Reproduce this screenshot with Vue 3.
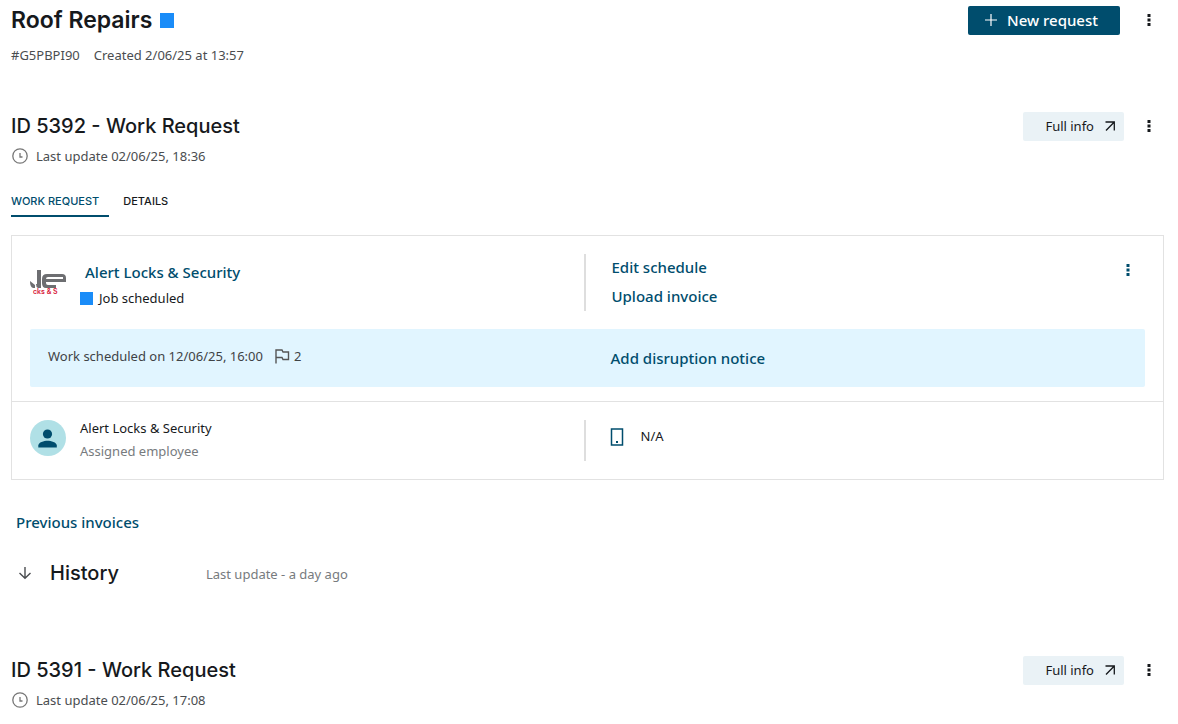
<script setup>
const requests = [
  { id: 5392, updated: '02/06/25, 18:36', open: true },
  { id: 5391, updated: '02/06/25, 17:08', open: false },
]
</script>

<template>
  <main class="page">
    <header class="row">
      <h1 class="title">Roof Repairs <span class="status"></span></h1>
      <div class="actions">
        <button class="primary" type="button">
          <svg width="12" height="12" viewBox="0 0 12 12" aria-hidden="true"><path d="M6 0v12M0 6h12" stroke="currentColor" stroke-width="1.2" /></svg>
          <span>New request</span>
        </button>
        <button class="kebab" type="button" aria-label="More options">
          <svg width="4" height="14" viewBox="0 0 4 14"><path d="M0.5 1h3v3h-3zM0.5 5.5h3v3h-3zM0.5 10h3v3h-3z" fill="currentColor" /></svg>
        </button>
      </div>
    </header>
    <p class="meta"><span>#G5PBPI90</span><span>Created 2/06/25 at 13:57</span></p>

    <section v-for="request in requests" :key="request.id" class="request">
      <div class="row">
        <h2 class="heading">ID {{ request.id }} - Work Request</h2>
        <div class="actions">
          <button class="secondary" type="button">
            <span>Full info</span>
            <svg width="12" height="12" viewBox="0 0 12 12" aria-hidden="true"><path d="M1.5 2H10.3V10.5M10.3 2L2 10.5" fill="none" stroke="currentColor" stroke-width="1.3" /></svg>
          </button>
          <button class="kebab" type="button" aria-label="More options">
            <svg width="4" height="14" viewBox="0 0 4 14"><path d="M0.5 1h3v3h-3zM0.5 5.5h3v3h-3zM0.5 10h3v3h-3z" fill="currentColor" /></svg>
          </button>
        </div>
      </div>
      <p class="updated">
        <svg width="18" height="18" viewBox="0 0 18 18" aria-hidden="true"><circle cx="9" cy="9" r="7.2" fill="none" stroke="#777" stroke-width="1.3" /><path d="M9 6V10H11.5" fill="none" stroke="#777" stroke-width="1.3" /></svg>
        <span>Last update {{ request.updated }}</span>
      </p>

      <template v-if="request.open">
        <nav class="tabs">
          <a class="tab active" href="#work">WORK REQUEST</a>
          <a class="tab" href="#details">DETAILS</a>
        </nav>

        <div class="card">
          <div class="job">
            <div class="split">
              <div class="left supplier">
                <svg class="logo" width="36" height="36" viewBox="0 0 36 36" aria-hidden="true">
                  <path d="M7 5H11V23H8Q6 22 6 19L7 19Z" fill="#6d6e71" />
                  <path d="M0 16L5 20V23H3Q0 22 0 16Z" fill="#6d6e71" />
                  <path d="M17 9H32Q36 9 36 13V17H16V18Q16 20 18 20H26V23H16Q12 23 12 18V14Q12 9 17 9ZM18 12Q16 12 16 14H33V12Z" fill="#6d6e71" fill-rule="evenodd" />
                  <text x="3" y="29" font-size="7" font-weight="600" font-family="Inter, sans-serif" fill="#d8203a">cks &amp; S</text>
                </svg>
                <div class="supplier-text">
                  <a class="link name" href="#supplier">Alert Locks &amp; Security</a>
                  <p class="state"><span class="status small"></span>Job scheduled</p>
                </div>
              </div>
              <div class="right bar links">
                <a class="link" href="#schedule">Edit schedule</a>
                <a class="link" href="#invoice">Upload invoice</a>
              </div>
              <button class="kebab blue" type="button" aria-label="Job options">
                <svg width="4" height="14" viewBox="0 0 4 14"><path d="M0.5 1h3v3h-3zM0.5 5.5h3v3h-3zM0.5 10h3v3h-3z" fill="currentColor" /></svg>
              </button>
            </div>
            <div class="notice">
              <p class="left scheduled">
                <span>Work scheduled on 12/06/25, 16:00</span>
                <svg width="16" height="16" viewBox="0 0 16 16" aria-hidden="true"><path d="M2 15.5V2H8L9 4H14.5V11.5H9L8 9.5H2" fill="none" stroke="#555" stroke-width="1.4" /></svg>
                <span>2</span>
              </p>
              <div class="right"><a class="link" href="#disruption">Add disruption notice</a></div>
            </div>
          </div>
          <div class="split employee">
            <div class="left person">
              <svg width="36" height="36" viewBox="0 0 36 36" aria-hidden="true"><circle cx="18" cy="18" r="18" fill="#b0e0e6" /><circle cx="17.5" cy="14" r="4.6" fill="#004d6d" /><path d="M8.3 27.5V25.5C8.3 22.3 14 20.7 17.5 20.7S26.8 22.3 26.8 25.5V27.5Z" fill="#004d6d" /></svg>
              <div class="person-text">
                <p>Alert Locks &amp; Security</p>
                <p class="role">Assigned employee</p>
              </div>
            </div>
            <div class="right bar phone">
              <svg width="14" height="20" viewBox="0 0 14 20" aria-hidden="true"><path d="M1.5 2H12.5V18H1.5Z" fill="none" stroke="#004d6d" stroke-width="1.5" /><path d="M6 14h2v2H6z" fill="#004d6d" /></svg>
              <span>N/A</span>
            </div>
          </div>
        </div>

        <a class="link previous" href="#previous">Previous invoices</a>

        <div class="history">
          <button class="toggle" type="button" aria-label="Expand history">
            <svg width="14" height="14" viewBox="0 0 14 14"><path d="M7 1V12M1.5 7L7 12.2L12.5 7" fill="none" stroke="currentColor" stroke-width="1.4" /></svg>
          </button>
          <h2 class="heading">History</h2>
          <span class="ago">Last update - a day ago</span>
        </div>
      </template>
    </section>
  </main>
</template>

<style>
body {
  margin: 0;
  background: #fff;
}
</style>

<style scoped>
.page {
  padding: 4px 14px 0 11px;
  font-family: 'Noto Sans', sans-serif;
  font-size: 13px;
  line-height: 18px;
  color: #16191c;
}
h1, h2, p {
  margin: 0;
}
button {
  font: inherit;
  border: 0;
  padding: 0;
  background: none;
  cursor: pointer;
}
svg {
  flex: none;
  display: block;
}
.row {
  display: flex;
  align-items: center;
  justify-content: space-between;
  height: 32px;
}
.title {
  display: flex;
  align-items: center;
  gap: 8px;
  font-family: Inter, sans-serif;
  font-size: 23px;
  line-height: 28px;
  font-weight: 600;
}
.heading {
  font-family: Inter, sans-serif;
  font-size: 20px;
  line-height: 26px;
  font-weight: 500;
}
.status {
  flex: none;
  width: 14px;
  height: 15px;
  background: #1a8cf8;
}
.status.small {
  width: 13px;
  height: 13px;
}
.actions {
  display: flex;
  align-items: center;
}
.kebab {
  display: flex;
  align-items: center;
  justify-content: center;
  width: 30px;
  height: 28px;
  color: #16191c;
}
.kebab.blue {
  color: #004d6d;
}
.primary {
  display: flex;
  align-items: center;
  gap: 10px;
  height: 29px;
  padding: 0 22px 0 17px;
  margin-right: 14px;
  border-radius: 2px;
  background: #004d6d;
  color: #fff;
  font-size: 15px;
  font-weight: 500;
}
.secondary {
  display: flex;
  align-items: center;
  gap: 10px;
  height: 29px;
  padding: 0 8px 0 22px;
  margin-right: 10px;
  border-radius: 2px;
  background: #eaf2f6;
  color: #16191c;
}
.meta {
  display: flex;
  gap: 14px;
  margin-top: 10px;
  color: #4a4d50;
}
.request {
  margin-top: 46px;
}
.request + .request {
  margin-top: 68px;
}
.updated {
  display: flex;
  align-items: center;
  gap: 7px;
  margin-top: 5px;
  color: #4a4d50;
}
.tabs {
  display: flex;
  gap: 14px;
  margin-top: 27px;
}
.tab {
  padding-bottom: 5px;
  padding-right: 10px;
  border-bottom: 2px solid transparent;
  font-family: Inter, sans-serif;
  font-size: 11px;
  font-weight: 500;
  color: #16191c;
  text-decoration: none;
}
.tab.active {
  color: #004d6d;
  border-color: #004d6d;
}
.card {
  margin-top: 18px;
  border: 1px solid #e2e2e2;
}
.job {
  padding: 18px 18px 14px;
  border-bottom: 1px solid #e2e2e2;
}
.split {
  position: relative;
  display: flex;
  align-items: flex-start;
}
.left {
  flex: none;
  box-sizing: border-box;
  width: calc(50% - 4px);
}
.right {
  flex: 1;
}
.bar {
  border-left: 2px solid #dedede;
  padding-left: 26px;
}
.supplier {
  display: flex;
  align-items: center;
  gap: 14px;
  height: 57px;
}
.supplier-text {
  padding-top: 4px;
}
.name {
  margin-left: 5px;
}
.state {
  display: flex;
  align-items: center;
  gap: 6px;
  margin-top: 6px;
}
.link {
  font-size: 15px;
  line-height: 21px;
  font-weight: 500;
  color: #004d6d;
  text-decoration: none;
}
.links {
  display: flex;
  flex-direction: column;
  align-items: flex-start;
  gap: 8px;
  box-sizing: border-box;
  height: 57px;
  padding-top: 3px;
}
.job .kebab {
  position: absolute;
  right: 2px;
  top: 2px;
}
.notice {
  display: flex;
  align-items: center;
  height: 58px;
  margin-top: 18px;
  border-radius: 2px;
  background: #e1f5ff;
}
.notice .right {
  padding-left: 27px;
}
.scheduled {
  display: flex;
  align-items: center;
  gap: 4px;
  padding-left: 18px;
  padding-bottom: 4px;
  color: #3f4346;
}
.scheduled svg {
  margin-left: 7px;
}
.employee {
  padding: 18px 18px 18px;
}
.person {
  display: flex;
  gap: 14px;
}
.person-text {
  margin-top: -1px;
}
.role {
  margin-top: 5px;
  color: #777b7e;
}
.phone {
  display: flex;
  align-items: flex-start;
  gap: 17px;
  height: 41px;
  box-sizing: border-box;
  padding-top: 7px;
  padding-left: 24px;
}
.previous {
  display: inline-block;
  margin-top: 32px;
  margin-left: 5px;
}
.history {
  display: flex;
  align-items: center;
  margin-top: 27px;
}
.toggle {
  margin: 0 18px 0 7px;
  color: #4a4d50;
}
.ago {
  margin-left: 87px;
  padding-top: 2px;
  color: #777b7e;
}
</style>
